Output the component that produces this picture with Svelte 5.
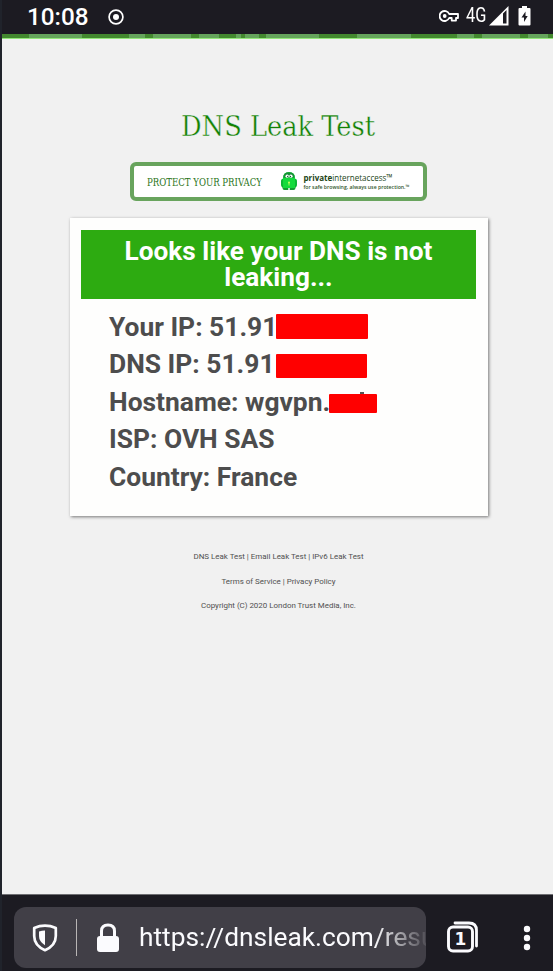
<script>
  const stripes = [
    [27, 0], [53, 1], [47, 0], [16, 1], [8, 0], [38, 1],
    [8, 0], [20, 1], [17, 0], [5, 1], [4, 0], [14, 1],
    [7, 0], [53, 1], [38, 0], [54, 1], [46, 0], [17, 1],
    [8, 0], [38, 1], [8, 0], [20, 1], [5, 0]
  ];
  const rows = [
    { text: 'Your IP: 51.91', mask: [276, 314, 92, 25] },
    { text: 'DNS IP: 51.91', mask: [276, 354, 91, 24] },
    { text: 'Hostname: wgvpn.', mask: [329, 394, 48, 19] },
    { text: 'ISP: OVH SAS' },
    { text: 'Country: France' }
  ];
</script>

<div class="screen">
  <header class="status">
    <span class="clock">10:08</span>
    <svg class="record" width="16" height="16" viewBox="0 0 16 16"><circle cx="8" cy="8" r="6.9" fill="none" stroke="#fff" stroke-width="1.7" /><circle cx="8" cy="8" r="3" fill="#fff" /></svg>
    <span class="grow"></span>
    <svg class="key" width="20" height="12" viewBox="0 0 20 12"><path d="M10.2 4A5 5 0 1 0 10.2 8H12.7V10.6H17V8H19V4Z" fill="none" stroke="#fff" stroke-width="1.8" stroke-linejoin="round" /><circle cx="5.7" cy="6" r="1.9" fill="#fff" /></svg>
    <span class="network">4G</span>
    <svg class="signal" width="20" height="20" viewBox="0 0 20 20"><path fill-rule="evenodd" d="M0 19.5 19.5 0V19.5ZM14 7.5V17.5H17.5V4Z" fill="#fff" /></svg>
    <svg class="battery" width="13" height="20" viewBox="0 0 13 20"><path d="M4 0H9V2H11.5Q12.5 2 12.5 3V18.5Q12.5 19.5 11.5 19.5H1.5Q.5 19.5 .5 18.5V3Q.5 2 1.5 2H4Z" fill="#fff" /><path d="M7.5 5.5 3.5 11.5H6V16L9.7 10H7.5Z" fill="#1c1b22" /></svg>
  </header>

  <main>
    <div class="stripe">
      {#each stripes as [w, light]}
        <i class:light={light === 1} style="width:{w}px"></i>
      {/each}
    </div>

    <h1><svg width="196" height="36"><text x="1" y="28" textLength="194" lengthAdjust="spacingAndGlyphs">DNS Leak Test</text></svg></h1>

    <div class="banner">
      <svg width="288" height="31" viewBox="0 0 288 31">
        <text class="protect" x="13" y="20" textLength="115" lengthAdjust="spacingAndGlyphs">PROTECT YOUR PRIVACY</text>
        <g transform="translate(147 6)">
          <rect x="0" y="6.500" width="16" height="9" rx="2.800" fill="#0cb835" />
          <path d="M1.500 13H7.300V18H3.500Q1.500 18 1.500 16ZM8.700 13H14.500V16Q14.500 18 12.500 18H8.700Z" fill="#149c32" />
          <path d="M2 6Q2 0 8 0T14 6V16H2Z" fill="#14db3c" />
          <path d="M2.300 5.800Q2.300 .3 8 .3T13.700 5.800Z" fill="#168f35" />
          <ellipse cx="6.200" cy="4.200" rx="1.700" ry="1.600" fill="#fff" /><ellipse cx="9.900" cy="4.200" rx="1.700" ry="1.600" fill="#fff" />
          <circle cx="6.700" cy="4.500" r=".7" fill="#153" /><circle cx="9.400" cy="4.500" r=".7" fill="#153" />
          <circle cx="8" cy="10.500" r="1" fill="#c8ff60" /><path d="M7.600 10.500h.8v3h-.8z" fill="#c8ff60" />
        </g>
        <text class="brand" x="169.500" y="14.500" textLength="89" lengthAdjust="spacingAndGlyphs"><tspan font-weight="700">private</tspan>internetaccess™</text>
        <text class="tag" x="169.500" y="23" textLength="106" lengthAdjust="spacingAndGlyphs">for safe browsing, always use protection.™</text>
      </svg>
    </div>

    <section class="card">
      <h2>Looks like your DNS is not<br />leaking...</h2>
      <ul>
        {#each rows as row}
          <li>{row.text}{#if row.mask}<span class="mask" style="left:{row.mask[0]}px;top:{row.mask[1]}px;width:{row.mask[2]}px;height:{row.mask[3]}px"></span>{/if}</li>
        {/each}
      </ul>
      <i class="ascender"></i>
    </section>

    <footer>
      <p>DNS Leak Test | Email Leak Test | IPv6 Leak Test</p>
      <p>Terms of Service | Privacy Policy</p>
      <p>Copyright (C) 2020 London Trust Media, Inc.</p>
    </footer>
  </main>

  <nav>
    <div class="address">
      <svg class="shield" width="26" height="28" viewBox="0 0 26 28"><path d="M13 1.700Q18.500 1.700 23.800 4V12Q23.800 21.500 13 26.200Q2.200 21.500 2.200 12V4Q7.500 1.700 13 1.700Z" fill="none" stroke="#fbfbfe" stroke-width="2.700" stroke-linejoin="round" /><path d="M13 6.500V21.300Q7 17.600 7 12V7.500Q10 6.500 13 6.500Z" fill="#fbfbfe" /></svg>
      <span class="divider"></span>
      <svg class="lock" width="24" height="30" viewBox="0 0 24 30"><path d="M5.500 14V8Q5.500 2 12 2T18.500 8V14" fill="none" stroke="#fbfbfe" stroke-width="3" /><rect x="1" y="13" width="22" height="16" rx="3" fill="#fbfbfe" /></svg>
      <span class="url">https://dnsleak.com/resu</span>
    </div>
    <svg class="tabs" width="32" height="32" viewBox="0 0 32 32"><path d="M8 2H22Q29.500 2 29.500 9.500V25" fill="none" stroke="#fbfbfe" stroke-width="2.800" stroke-linecap="round" /><rect x="1.500" y="6" width="24" height="24" rx="4.500" fill="none" stroke="#fbfbfe" stroke-width="2.900" /><text x="13.500" y="24" text-anchor="middle">1</text></svg>
    <svg class="menu" width="8" height="26" viewBox="0 0 8 26"><circle cx="4" cy="4" r="3.200" fill="#fbfbfe" /><circle cx="4" cy="13" r="3.200" fill="#fbfbfe" /><circle cx="4" cy="22" r="3.200" fill="#fbfbfe" /></svg>
  </nav>
</div>

<style>
  .screen { position: relative; box-sizing: border-box; width: 553px; height: 971px; overflow: hidden; display: flex; flex-direction: column; border-left: 2px solid #20232b; background: #1c1b22; font-family: Roboto, sans-serif; }
  svg { display: block; flex: none; }
  .status { height: 34px; flex: none; display: flex; align-items: center; padding: 0 22px 0 25px; box-sizing: border-box; color: #fff; }
  .clock { font-size: 24.300px; font-weight: 500; line-height: 32px; width: 81px; }
  .grow { flex: 1; }
  .key { margin-top: -2px; }
  .network { font-size: 19.500px; line-height: 32px; width: 20px; margin: -2px 3px 0 7px; white-space: nowrap; transform: scaleX(.84); transform-origin: left; }
  .battery { margin-left: 9px; margin-top: -3px; }
  .signal { margin-top: -2px; }
  main { height: 860px; flex: none; background: #f1f1f1; display: flex; flex-direction: column; align-items: center; border-bottom: 1px solid #6e6e72; }
  .stripe { width: 551px; height: 4px; display: flex; border-bottom: 1px solid #91e878; flex: none; }
  .stripe i { background: #43882f; flex: none; }
  .stripe .light { background: #65a45c; }
  h1 { margin: 69px 0 0 0; height: 36px; flex: none; }
  h1 text { font: 27px 'DejaVu Serif', serif; font-stretch: condensed; fill: #118203; stroke: #f1f1f1; stroke-width: .35px; }
  .banner { box-sizing: border-box; width: 297px; height: 39px; margin: 18px 0 0 2px; border: 4px solid #68a45d; border-radius: 6px; background: #fff; flex: none; }
  .protect { font: 11px 'DejaVu Serif', serif; fill: #2b7420; }
  .brand { font: 9.500px 'Open Sans', sans-serif; fill: #214417; }
  .tag { font: 600 6px 'Open Sans', sans-serif; fill: #31552a; }
  .card { box-sizing: border-box; width: 418px; height: 298px; margin: 17px 0 0 3px; padding: 12px 12px 12px 11px; background: #fefefd; box-shadow: 1px 1px 3px #777; flex: none; }
  h2 { box-sizing: border-box; height: 69px; margin: 0; padding-top: 8px; background: #2dab11; color: #fff; text-align: center; font-size: 26.200px; line-height: 26px; font-weight: 700; }
  ul { list-style: none; margin: 0; padding: 9.600px 0 0 28px; color: #4d4d4d; font-size: 26.400px; line-height: 37.600px; font-weight: 700; }
  li { white-space: nowrap; }
  .mask { position: absolute; margin-left: -2px; background: #f00; border-radius: 1px; }
  .ascender { position: absolute; left: 358px; top: 392px; width: 4px; height: 2px; background: #555; }
  footer { margin: 28px 0 0 2px; text-align: center; color: #505050; font-size: 7.950px; }
  footer p { margin: 0; height: 24.500px; line-height: 25px; }
  nav { height: 77px; display: flex; align-items: flex-start; flex: none; padding: 12px 0 0 12px; box-sizing: border-box; }
  .address { box-sizing: border-box; width: 412px; height: 61px; border-radius: 12px; background: #413f47; display: flex; align-items: center; padding-left: 18px; overflow: hidden; flex: none; }
  .divider { width: 1px; height: 37px; margin: 0 19px 0 18px; background: #b8b5b5; flex: none; }
  .url { margin-left: 19px; width: 287px; overflow: hidden; color: #fbfbfe; font-size: 26.300px; line-height: 63px; white-space: nowrap; mask-image: linear-gradient(90deg, #000 235px, transparent 292px); }
  .tabs { margin: 14px 0 0 21px; }
  .tabs text { font: 700 17px 'DejaVu Sans', sans-serif; fill: #fbfbfe; }
  .menu { margin: 18px 0 0 44px; }
</style>
